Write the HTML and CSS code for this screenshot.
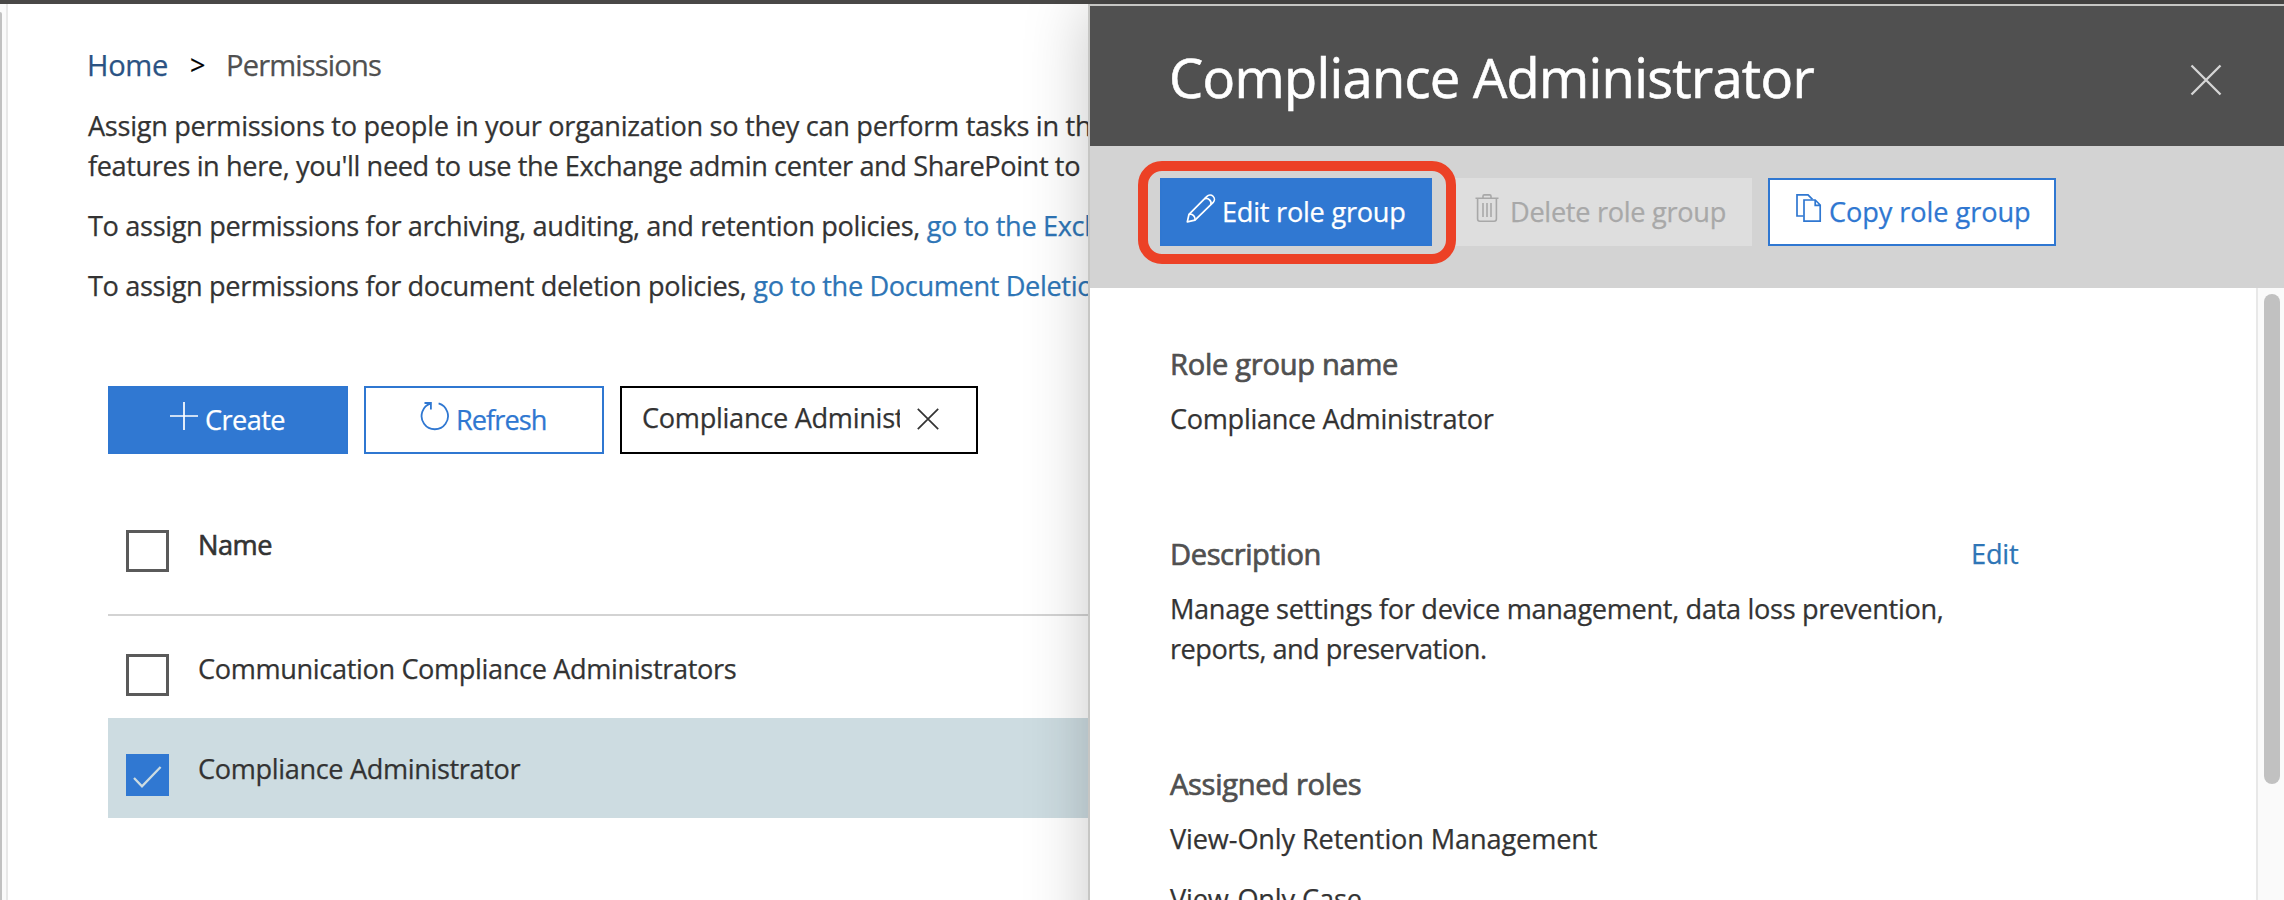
FILE: index.html
```html
<!DOCTYPE html>
<html lang="en">
<head>
<meta charset="utf-8">
<title>Permissions</title>
<link rel="stylesheet" href="styles.css">
</head>
<body>
<div class="app">
<div class="topbar"></div>
<div class="shell">
  <div class="nav-edge"><div class="nav-thumb"></div></div>
  <main class="page">
    <nav class="crumbs">
      <a class="crumb-home" href="#">Home</a>
      <span class="crumb-sep">&gt;</span>
      <span class="crumb-current">Permissions</span>
    </nav>
    <div class="intro">
      <p><span class="intro-a">Assign permissions to people in your organization so they can perform tasks in the</span><br><span class="intro-b">features in here, you'll need to use the Exchange admin center and SharePoint to</span></p>
      <p class="intro-c">To assign permissions for archiving, auditing, and retention policies, <a href="#">go to the Exchange</a></p>
      <p class="intro-d">To assign permissions for document deletion policies, <a href="#">go to the Document Deletion</a></p>
    </div>
    <div class="actions">
      <button class="btn btn-primary btn-create">
        <svg width="30" height="28" viewBox="0 0 30 28"><path d="M1 14H29M15 0V28" stroke="currentColor" stroke-width="1.7" fill="none"/></svg>
        <span>Create</span>
      </button>
      <button class="btn btn-outline btn-refresh">
        <svg width="30" height="30" viewBox="0 0 30 30" fill="none" stroke="currentColor" stroke-width="1.8"><path d="M18.6 1.4A13.2 13.2 0 1 1 11 1.4"/><path d="M4.5 1H10.9V7.5"/></svg>
        <span>Refresh</span>
      </button>
      <div class="search">
        <span class="search-text">Compliance Administrator</span>
        <svg width="22" height="22" viewBox="0 0 22 22"><path d="M.8 .8L21.2 21.2M21.2 .8L.8 21.2" stroke="#333" stroke-width="1.7"/></svg>
      </div>
    </div>
    <div class="table">
      <div class="row row-head"><span class="check"></span><span class="cell cell-head">Name</span></div>
      <div class="row"><span class="check"></span><span class="cell">Communication Compliance Administrators</span></div>
      <div class="row row-selected">
        <span class="check check-on"><svg width="43" height="42" viewBox="0 0 43 42"><path d="M8 24L16 32.3L34.6 13" stroke="#cddce1" stroke-width="2.3" fill="none"/></svg></span>
        <span class="cell">Compliance Administrator</span>
      </div>
    </div>
  </main>
</div>
<aside class="panel">
  <header class="panel-head">
    <h1>Compliance Administrator</h1>
    <svg width="32" height="32" viewBox="0 0 32 32"><path d="M1.5 1.5L30.5 30.5M30.5 1.5L1.5 30.5" stroke="#d6d6d6" stroke-width="2.3"/></svg>
  </header>
  <div class="panel-tools">
    <button class="btn btn-primary btn-edit">
      <svg width="30" height="30" viewBox="0 0 30 30" fill="none" stroke="currentColor" stroke-width="1.7" stroke-linejoin="round"><path d="M1.3 27.9L3 20.3L20.9 2.4A4.3 4.3 0 0 1 27.2 8.4L9 26.2Z"/><path d="M3 20.3A5 5 0 0 1 9 26.2M18.7 4.600A5 5 0 0 1 24.9 10.7"/></svg>
      <span>Edit role group</span>
      <i class="ring"></i>
    </button>
    <button class="btn btn-disabled btn-delete">
      <svg width="24" height="28" viewBox="0 0 24 28" fill="none" stroke="currentColor" stroke-width="1.6"><path d="M.5 4.3H23.5M8 4.3V2.2Q8 .9 9.3 .9H14.7Q16 .9 16 2.2V4.3M2.6 4.3V25Q2.6 27.2 4.8 27.2H19.2Q21.4 27.2 21.4 25V4.3M8 9V23M12 9V23M16 9V23"/></svg>
      <span>Delete role group</span>
    </button>
    <button class="btn btn-outline btn-copy">
      <svg width="26" height="28" viewBox="0 0 26 28" fill="none" stroke="currentColor" stroke-width="1.7"><path d="M7.5 22H1V.9H12L16.5 5.4"/><path d="M8 6H19.2L24.2 11V27.1H8ZM19.2 6V11.3H24.2"/></svg>
      <span>Copy role group</span>
    </button>
  </div>
  <div class="panel-body">
    <div class="details">
      <section>
        <h2 class="h-role">Role group name</h2>
        <p>Compliance Administrator</p>
      </section>
      <section>
        <div class="section-head"><h2 class="h-desc">Description</h2><a href="#">Edit</a></div>
        <p class="desc">Manage settings for device management, data loss prevention,<br><span class="desc-end">reports, and preservation.</span></p>
      </section>
      <section>
        <h2>Assigned roles</h2>
        <ul class="roles"><li>View-Only Retention Management</li><li>View-Only Case</li></ul>
      </section>
    </div>
    <div class="scroll"><div class="scroll-thumb"></div></div>
  </div>
</aside>
</div>
</body>
</html>
```
FILE: styles.css
```css
* { box-sizing: border-box; }
body { margin: 0; }
.app {
  height: 900px;
  position: relative;
  overflow: hidden;
  background: #fff;
  color: #333;
  font: 27.16px/40px "Open Sans", "Noto Sans", sans-serif;
  letter-spacing: -0.42px;
  white-space: nowrap;
  -webkit-text-stroke: 0.25px;
}
h1, h2, p, ul { margin: 0; padding: 0; font-weight: 400; }
ul { list-style: none; }
a { color: #2e75b6; text-decoration: none; }
svg { flex: none; display: block; }

.topbar { height: 4px; background: #494847; }
.shell { display: flex; height: 896px; }
.nav-edge { width: 8px; background: #fafafa; border-right: 2px solid #e8e8e8; padding-top: 8px; }
.nav-thumb { width: 2px; height: 888px; background: #c1c1c1; border-top-right-radius: 2px; }
.page { flex: 1; padding-top: 41px; overflow: hidden; }

.crumbs { display: flex; height: 40px; padding-left: 79px; font-size: 29.1px; }
.crumb-home { width: 103px; color: #2b5384; letter-spacing: -0.3px; }
.crumb-sep { width: 36px; color: #000; font-size: 27px; }
.crumb-current { color: #505050; letter-spacing: -0.85px; }

.intro { padding: 21px 0 0 80px; }
.intro p + p { margin-top: 20px; }
.intro-a { letter-spacing: -0.3px; }
.intro-b { letter-spacing: -0.39px; }
.intro-c { letter-spacing: -0.35px; }
.intro-d { letter-spacing: -0.36px; }

.actions { display: flex; margin-top: 80px; padding-left: 100px; }
.btn {
  position: relative;
  display: flex;
  align-items: flex-start;
  height: 68px;
  padding: 0;
  border: 2px solid #2f77d1;
  font: inherit;
}
.btn svg { margin-top: 14px; }
.btn span { margin-top: 12px; }
.btn-primary { background: #3078d2; color: #fff; }
.btn-outline { background: #fff; color: #2f77d1; }
.btn-disabled { background: #dedede; border-color: #dedede; color: #a8a8a8; }
.btn-create { width: 240px; padding-left: 59px; gap: 6px; letter-spacing: -0.6px; }
.btn-refresh { width: 240px; margin-left: 16px; padding-left: 54px; gap: 6px; letter-spacing: -0.95px; }
.search {
  display: flex;
  width: 358px;
  height: 68px;
  margin-left: 16px;
  padding-left: 20px;
  border: 2px solid #000;
}
.search-text { width: 258px; height: 50px; padding-top: 10px; overflow: hidden; letter-spacing: -0.3px; }
.search svg { margin: 19.5px 0 0 17px; }

.table { margin: 40px 0 0 100px; }
.row { display: flex; height: 100px; padding: 31px 0 0 18px; }
.row-head { height: 122px; margin-bottom: 2px; border-bottom: 2px solid #d3d3d3; }
.row-selected { background: #cddce1; }
.check { width: 43px; height: 42px; margin: 5px 29px 0 0; border: 3px solid #5a5a5a; }
.check-on { border: 0; background: #3078d2; }
.cell { letter-spacing: -0.37px; }
.cell-head { letter-spacing: -0.5px; -webkit-text-stroke: 0.6px #333; }

.panel {
  position: absolute;
  left: 1088px;
  top: 4px;
  width: 1198px;
  height: 980px;
  background: #fff;
  border: 2px solid #c6c6c4;
  box-shadow: 0 0 60px rgba(0, 0, 0, 0.22);
}
.panel-head {
  display: flex;
  justify-content: space-between;
  height: 140px;
  padding: 58px 62px 0 79px;
  background: #505050;
}
.panel-head h1 { margin-top: -31px; color: #fff; font-size: 54.3px; line-height: 88px; letter-spacing: -0.72px; -webkit-text-stroke: 0.6px; }
.panel-tools { display: flex; height: 142px; padding: 32px 0 0 70px; background: #d3d3d3; }
.btn-edit { width: 272px; padding-left: 24px; gap: 6px; z-index: 1; letter-spacing: -0.25px; }
.ring {
  position: absolute;
  left: -24px;
  top: -19px;
  width: 318px;
  height: 103px;
  border: 10px solid #ec4126;
  border-radius: 24px;
}
.btn-delete { width: 304px; margin-left: 16px; padding-left: 25px; gap: 11px; letter-spacing: -0.3px; }
.btn-copy { width: 288px; margin-left: 16px; padding-left: 26px; gap: 7px; letter-spacing: -0.08px; }

.panel-body { display: flex; justify-content: space-between; height: 694px; }
.details { width: 930px; padding: 56px 0 0 80px; }
.details section { margin-bottom: 95px; letter-spacing: -0.32px; }
.details h2 { margin-bottom: 15px; color: #505050; font-size: 29.1px; letter-spacing: -0.32px; -webkit-text-stroke: 0.7px #505050; }
.details .h-role { letter-spacing: -0.28px; }
.details .h-desc { letter-spacing: -0.4px; }
.section-head { display: flex; justify-content: space-between; }
.section-head a { width: 49px; letter-spacing: -0.2px; }
.desc-end { letter-spacing: -0.52px; }
.roles li { margin-bottom: 20px; letter-spacing: -0.14px; }
.scroll { width: 28px; padding: 6px 0 0 6px; background: #fafafa; border-left: 2px solid #e8e8e8; }
.scroll-thumb { width: 16px; height: 490px; border-radius: 8px; background: #c1c1c1; }
```
